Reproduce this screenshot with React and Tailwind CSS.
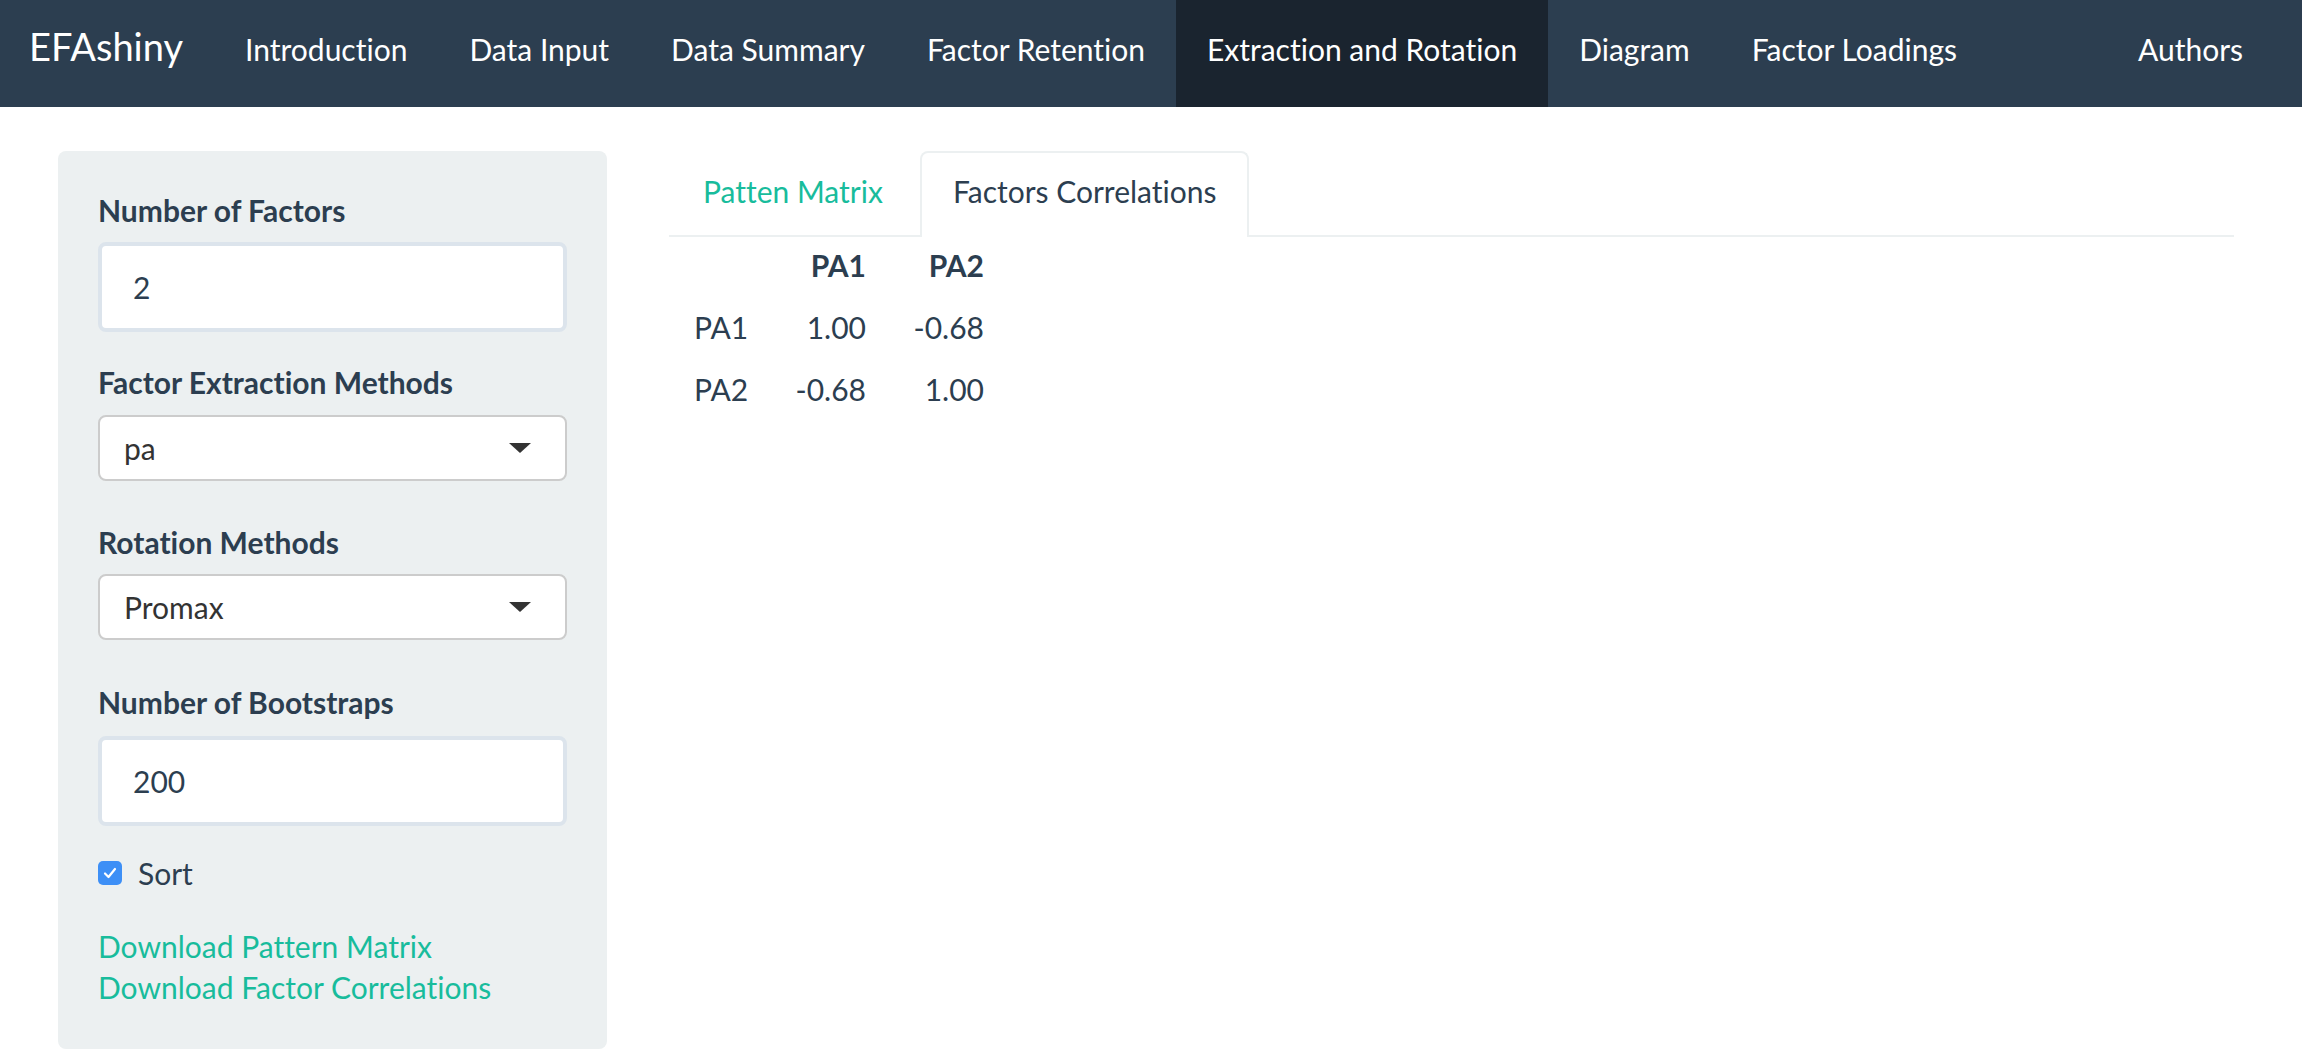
const navItems = [
  { label: 'Introduction' },
  { label: 'Data Input' },
  { label: 'Data Summary' },
  { label: 'Factor Retention' },
  { label: 'Extraction and Rotation', active: true },
  { label: 'Diagram' },
  { label: 'Factor Loadings' },
]

const rows = [
  { name: 'PA1', values: ['1.00', '-0.68'] },
  { name: 'PA2', values: ['-0.68', '1.00'] },
]

function Caret() {
  return (
    <svg width="22" height="10" viewBox="0 0 22 10" className="shrink-0">
      <path d="M0 0 L22 0 L11 10 Z" fill="#333333" />
    </svg>
  )
}

function NumberInput({ value }) {
  return (
    <div className="h-[90px] border-[4px] border-[#dce4ec] rounded-[8px] bg-white flex items-center pl-[31px] text-[30px] text-[#2c3e50]">
      {value}
    </div>
  )
}

function SelectBox({ value }) {
  return (
    <div className="h-[66px] border-[2px] border-[#cccccc] rounded-[8px] bg-white flex items-center justify-between pl-[24px] pr-[34px] text-[30px] text-[#333333]">
      <span>{value}</span>
      <Caret />
    </div>
  )
}

export default function App() {
  return (
    <div
      className="min-h-screen bg-white text-[#2c3e50] [font-variant-ligatures:none]"
      style={{ fontFamily: 'Lato, "Noto Sans", sans-serif' }}
    >
      {/* navbar */}
      <nav className="h-[107px] bg-[#2c3e50] flex items-stretch pr-[29px]">
        <a className="pl-[29px] pr-[31px] pt-[23px] text-white text-[38px] leading-[46px]">EFAshiny</a>
        {navItems.map((item) => (
          <a
            key={item.label}
            className={`px-[31px] pt-[31px] text-white text-[30px] leading-[36px] ${item.active ? 'bg-[#1a242f]' : ''}`}
          >
            {item.label}
          </a>
        ))}
        <a className="ml-auto px-[30px] pt-[31px] text-white text-[30px] leading-[36px]">Authors</a>
      </nav>

      <div className="flex pl-[58px] pr-[68px] pt-[44px] gap-[62px]">
        {/* sidebar */}
        <aside className="w-[549px] shrink-0 bg-[#ecf0f1] rounded-[8px] px-[40px] pt-[39px] pb-[41px]">
          <div className="text-[30px] leading-[40px] font-bold mb-[12px]">Number of Factors</div>
          <NumberInput value="2" />

          <div className="text-[30px] leading-[40px] font-bold mt-[30px] mb-[13px]">Factor Extraction Methods</div>
          <SelectBox value="pa" />

          <div className="text-[30px] leading-[40px] font-bold mt-[41px] mb-[12px]">Rotation Methods</div>
          <SelectBox value="Promax" />

          <div className="text-[30px] leading-[40px] font-bold mt-[42px] mb-[14px]">Number of Bootstraps</div>
          <NumberInput value="200" />

          <label className="flex items-center gap-[16px] mt-[27px] text-[30px] leading-[40px]">
            <span className="w-[24px] h-[24px] rounded-[5px] bg-[#3d8ff6] flex items-center justify-center">
              <svg width="16" height="16" viewBox="0 0 16 16">
                <path d="M3 8.5 L6.5 12 L13 4" fill="none" stroke="white" strokeWidth="2.2" strokeLinecap="round" strokeLinejoin="round" />
              </svg>
            </span>
            Sort
          </label>

          <div className="mt-[33px] text-[30px] leading-[41px] text-[#18bc9c]">
            <a className="block">Download Pattern Matrix</a>
            <a className="block">Download Factor Correlations</a>
          </div>
        </aside>

        {/* main */}
        <main className="flex-1">
          <div className="flex border-b-[2px] border-[#ecf0f1] h-[86px]">
            <a className="mr-[4px] pl-[34px] pr-[33px] pt-[20px] text-[30px] leading-[40px] text-[#18bc9c]">Patten Matrix</a>
            <a className="-mb-[2px] px-[31px] pt-[18px] text-[30px] leading-[40px] bg-white border-[2px] border-b-0 border-[#ecf0f1] rounded-t-[8px]">
              Factors Correlations
            </a>
          </div>

          <div className="grid grid-cols-[100px_97px_118px] text-[30px] leading-[36px] auto-rows-[62px]">
            <div></div>
            <div className="pt-[10px] text-right font-bold">PA1</div>
            <div className="pt-[10px] text-right font-bold">PA2</div>
            {rows.map((r) => (
              <div key={r.name} className="contents">
                <div className="pt-[10px] pl-[25px]">{r.name}</div>
                <div className="pt-[10px] text-right">{r.values[0]}</div>
                <div className="pt-[10px] text-right">{r.values[1]}</div>
              </div>
            ))}
          </div>
        </main>
      </div>
    </div>
  )
}
